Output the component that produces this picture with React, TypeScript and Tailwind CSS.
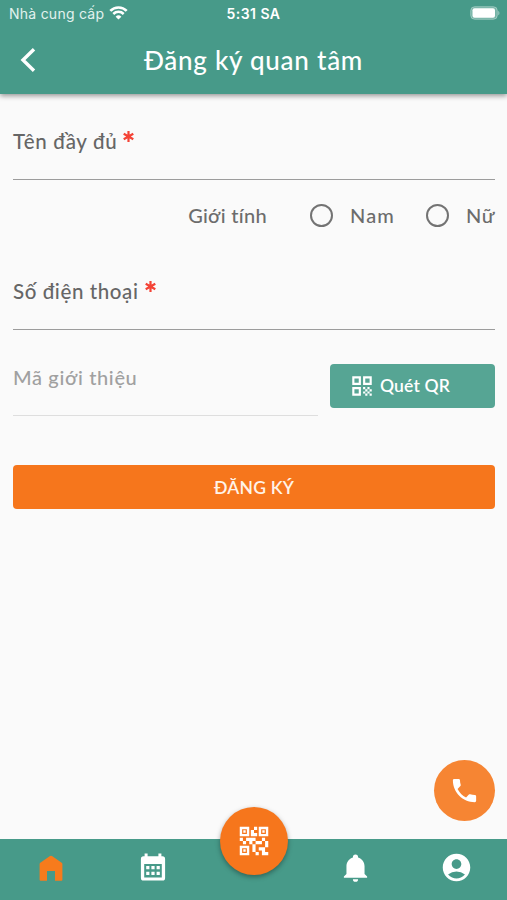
import type { ReactNode } from 'react'
import { MdAccountCircle, MdPhone, MdQrCode, MdQrCode2 } from 'react-icons/md'

// Props interfaces
interface FieldProps {
  label: string
  className: string
}

interface GenderOptionProps {
  label: ReactNode
  className?: string
}

const StatusBar = () => (
  <div className="relative flex h-[27px] items-center justify-between pl-[9px] pr-[7px] font-['Inter','Liberation_Sans',sans-serif] text-white">
    <div className="flex items-center gap-[5px]">
      <span className="text-[14px] tracking-[0.25px] text-[#e2f2ee]">Nhà cung cấp</span>
      <svg className="-mt-px" width="19" height="14" viewBox="0 0 19 14" fill="none">
        <path d="M1.3 4.9a11.6 11.6 0 0 1 16.4 0" stroke="white" strokeWidth="2.7" />
        <path d="M4.3 8a7.4 7.4 0 0 1 10.4 0" stroke="white" strokeWidth="2.5" />
        <path d="M9.5 13.6 6.6 10.7a4.1 4.1 0 0 1 5.8 0z" fill="white" />
      </svg>
    </div>
    <span className="absolute inset-x-0 text-center text-[14px] font-semibold tracking-[0.45px]">5:31 SA</span>
    <svg className="-mt-px" width="30" height="14" viewBox="0 0 30 14">
      <rect x="0.7" y="0.7" width="26.6" height="12.6" rx="4" fill="white" fillOpacity="0.25" stroke="white" strokeOpacity="0.35" />
      <rect x="2.5" y="2.3" width="22.5" height="9.4" rx="2" fill="white" />
      <path d="M28.3 4.7v4.6c1.5-.8 1.5-3.8 0-4.6z" fill="white" fillOpacity="0.5" />
    </svg>
  </div>
)

const Header = () => (
  <header className="relative z-10 h-[94px] shrink-0 bg-[#479a89] shadow-[0_2px_5px_rgba(0,0,0,0.4)]">
    <StatusBar />
    <div className="relative flex h-[65px] items-center pl-5">
      <svg width="16" height="26" viewBox="0 0 16 26" fill="none">
        <path d="M14 2.3 3 13l11 10.7" stroke="white" strokeWidth="3.4" />
      </svg>
      <h1 className="absolute inset-x-0 text-center text-[26px] font-medium leading-[30px] tracking-[0.75px] text-white">
        Đăng ký quan tâm
      </h1>
    </div>
  </header>
)

const Field = ({ label, className }: FieldProps) => (
  <label className="flex h-[52px] items-start gap-[6px] border-b border-[#9c9c9c] text-[#666]">
    <span className={`text-[20.5px] font-medium leading-[27px] ${className}`}>{label}</span>
    <svg className="mt-[3px]" width="11" height="11" viewBox="0 0 11 11">
      <path d="M5.5 0v11M.7 2.75l9.6 5.5M.7 8.25l9.6-5.5" stroke="#f44336" strokeWidth="2.2" />
    </svg>
  </label>
)

const GenderOption = ({ label, className = '' }: GenderOptionProps) => (
  <label className={`flex items-center ${className}`}>
    <span className="mr-[17px] size-[23px] rounded-full border-[2.5px] border-[#737373]" />
    {label}
  </label>
)

const BottomNav = () => (
  <nav className="relative flex h-[61px] shrink-0 items-center bg-[#479a89] pb-1 text-white">
    <div className="flex flex-1 justify-center">
      <svg width="24" height="26" viewBox="0 0 24 26">
        <path
          d="M11 1a1.7 1.7 0 0 1 2 0l9.7 6.8a1.7 1.7 0 0 1 .7 1.4V24.8a1 1 0 0 1-1 1H16v-9.9H8v9.9H1.6a1 1 0 0 1-1-1V9.2a1.7 1.7 0 0 1 .7-1.4z"
          fill="#f77b1c"
        />
      </svg>
    </div>
    <div className="flex flex-1 justify-center pl-px">
      <svg className="-mt-px" width="26" height="28" viewBox="0 0 26 28">
        <path
          fill="white"
          fillRule="evenodd"
          d="M4.6.5h3v2.8h10.8V.5h3v2.8h1.1a2.6 2.6 0 0 1 2.6 2.6v19a2.6 2.6 0 0 1-2.6 2.6h-19A2.6 2.6 0 0 1 .9 24.9V5.9a2.6 2.6 0 0 1 2.6-2.6h1.1zM4.2 11v13.4h17.6V11z"
        />
        <path fill="white" d="M6.2 13h3.2v3.2H6.2zM11.4 13h3.2v3.2h-3.2zM16.6 13h3.2v3.2h-3.2zM6.2 18.7h3.2v3.2H6.2zM11.4 18.7h3.2v3.2h-3.2zM16.6 18.7h3.2v3.2h-3.2z" />
      </svg>
    </div>
    <div className="flex-1" />
    <div className="flex flex-1 justify-center pl-px">
      <svg className="-mt-px" width="31" height="31" viewBox="0 0 24 24" fill="white">
        <path d="M21 19v1H3v-1l2-2v-6c0-3.1 2.03-5.83 5-6.71V4a2 2 0 0 1 4 0v.29c2.97.88 5 3.61 5 6.71v6zM14 21a2 2 0 0 1-4 0" />
      </svg>
    </div>
    <div className="flex flex-1 justify-center">
      <MdAccountCircle size={33} className="-mt-px" />
    </div>

    {/* Scan button raised over the bar */}
    <button className="absolute -top-8 left-[220px] flex size-[68px] items-center justify-center rounded-full bg-[#f6761c] shadow-[0_2px_5px_rgba(0,0,0,0.35)]">
      <MdQrCode2 size={38} />
    </button>
  </nav>
)

const App = () => {
  return (
    <div className="flex h-[900px] w-[507px] flex-col bg-[#fafafa] font-['Lato','Noto_Sans',sans-serif]">
      <Header />

      <main className="relative flex-1 pl-[13px] pr-3 pt-[34px]">
        <Field label="Tên đầy đủ" className="tracking-[0.7px]" />

        <div className="flex h-[70px] items-center justify-end text-[20px] font-medium text-[#6c6c6c]">
          <span className="mr-[43px] tracking-[0.3px]">Giới tính</span>
          <GenderOption label="Nam" className="mr-[31px] tracking-[1.2px]" />
          <GenderOption label="Nữ" className="tracking-[0.5px]" />
        </div>

        <div className="mt-[28px]">
          <Field label="Số điện thoại" className="tracking-[0.6px]" />
        </div>

        <div className="mt-[34px] flex justify-between">
          <div className="h-[52px] w-[305px] border-b border-[#dedede] text-[20px] font-medium leading-[26px] tracking-[0.65px] text-[#a0a0a0]">
            Mã giới thiệu
          </div>
          <button className="flex h-11 w-[165px] items-center rounded-[4px] bg-[#56a594] pl-[19px] text-[17.5px] font-semibold tracking-[0.15px] text-white">
            <MdQrCode size={26} className="mr-[5px]" />
            Quét QR
          </button>
        </div>

        <button className="mt-[49px] h-11 w-full rounded-[4px] bg-[#f6761c] pt-0.5 text-[17.5px] font-semibold tracking-[0.2px] text-[#fff3e8]">
          ĐĂNG KÝ
        </button>

        {/* Floating call button */}
        <button className="absolute bottom-[18px] right-[12px] flex size-[61px] items-center justify-center rounded-full bg-[#f68533] text-white">
          <MdPhone size={31} />
        </button>
      </main>

      <BottomNav />
    </div>
  )
}

export default App
